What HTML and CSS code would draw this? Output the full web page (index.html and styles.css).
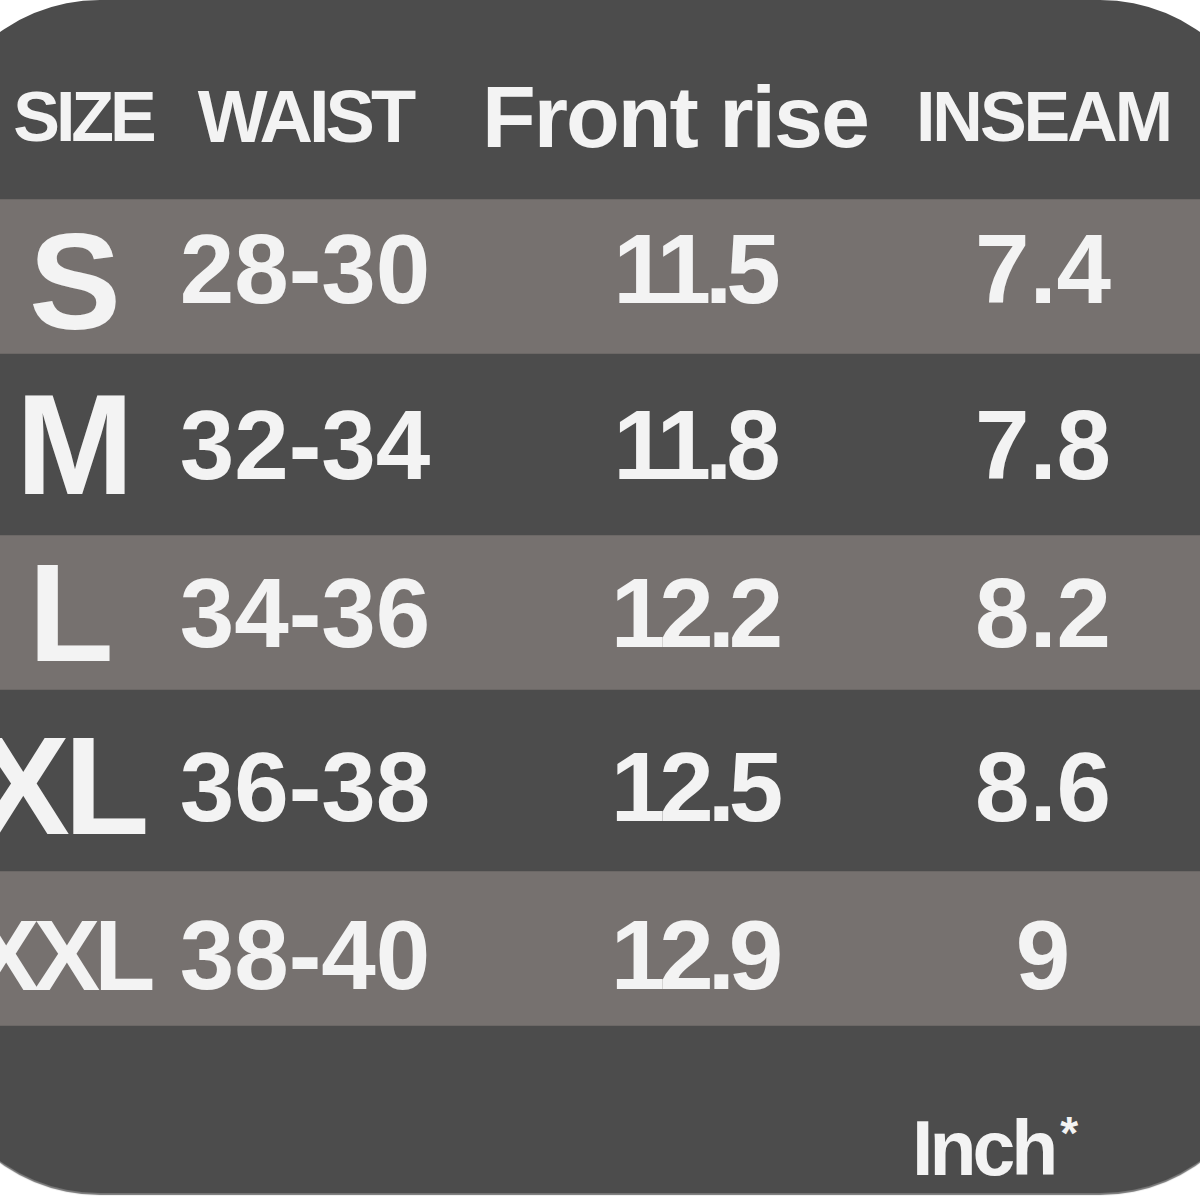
FILE: index.html
```html
<!DOCTYPE html>
<html lang="en">
<head>
<meta charset="utf-8">
<title>Size chart</title>
<link rel="stylesheet" href="styles.css">
</head>
<body>
<div class="card">
  <div class="row head">
    <div class="cell c1"><span class="h-size">SIZE</span></div>
    <div class="cell c2"><span class="h-waist">WAIST</span></div>
    <div class="cell c3"><span class="h-front">Front rise</span></div>
    <div class="cell c4"><span class="h-inseam">INSEAM</span></div>
  </div>
  <div class="row light r-s">
    <div class="cell c1"><span class="sz sz-s">S</span></div>
    <div class="cell c2 num"><span class="n">28-30</span></div>
    <div class="cell c3 num"><span class="n dec">11.5</span></div>
    <div class="cell c4 num"><span class="n">7.4</span></div>
  </div>
  <div class="row dark r-m">
    <div class="cell c1"><span class="sz sz-m">M</span></div>
    <div class="cell c2 num"><span class="n">32-34</span></div>
    <div class="cell c3 num"><span class="n dec">11.8</span></div>
    <div class="cell c4 num"><span class="n">7.8</span></div>
  </div>
  <div class="row light r-l">
    <div class="cell c1"><span class="sz sz-l">L</span></div>
    <div class="cell c2 num"><span class="n">34-36</span></div>
    <div class="cell c3 num"><span class="n dec">12.2</span></div>
    <div class="cell c4 num"><span class="n">8.2</span></div>
  </div>
  <div class="row dark r-xl">
    <div class="cell c1"><span class="sz sz-xl">XL</span></div>
    <div class="cell c2 num"><span class="n">36-38</span></div>
    <div class="cell c3 num"><span class="n dec">12.5</span></div>
    <div class="cell c4 num"><span class="n">8.6</span></div>
  </div>
  <div class="row light r-xxl">
    <div class="cell c1"><span class="sz sz-xxl">XXL</span></div>
    <div class="cell c2 num"><span class="n">38-40</span></div>
    <div class="cell c3 num"><span class="n dec">12.9</span></div>
    <div class="cell c4 num"><span class="n">9</span></div>
  </div>
  <div class="foot">
    <span class="unit">Inch<span class="star">*</span></span>
  </div>
</div>
</body>
</html>
```
FILE: styles.css
```css
html, body {
  margin: 0;
  padding: 0;
  background: #ffffff;
  overflow: hidden;
  width: 1200px;
  height: 1200px;
}

.card {
  margin-left: -72px;
  width: 1344px;
  height: 1193px;
  border-radius: 172px;
  overflow: hidden;
  background: #4c4c4c;
  box-shadow: 0 2px 1px rgba(0, 0, 0, 0.55);
  font-family: "Liberation Sans", Arial, sans-serif;
  font-weight: 700;
  color: #f3f3f3;
  display: flex;
  flex-direction: column;
}

.row {
  display: grid;
  grid-template-columns: 150px 310px 450px 266px 1fr;
  padding-left: 72px;
  box-sizing: border-box;
  align-items: center;
}

.head { height: 199px; padding-top: 34px; }
.light { height: 155px; background: #76716f; box-shadow: inset 0 1px 0 #6c6866, inset 0 -1px 0 #6c6866; }
.dark { height: 181px; }

.cell {
  display: flex;
  justify-content: center;
  align-items: center;
  line-height: 1;
  white-space: nowrap;
  box-sizing: border-box;
}

/* header labels */
.h-size { font-size: 70px; letter-spacing: -4px; margin-left: 16px; }
.h-waist { font-size: 74px; letter-spacing: -4px; }
.h-front { font-size: 88px; letter-spacing: -2px; margin-left: -20px; }
.h-inseam { font-size: 70px; letter-spacing: -3px; }

/* size letters */
.sz { letter-spacing: -6px; }
.sz-s { font-size: 138px; margin-left: -6px; }
.sz-m { font-size: 142px; margin-left: -6px; }
.sz-l { font-size: 140px; margin-left: -14px; }
.sz-xl { font-size: 140px; margin-left: -30px; }
.sz-xxl { font-size: 100px; margin-left: -28px; }

/* numbers */
.n { font-size: 98px; }
.dec { letter-spacing: -6px; margin-left: 18px; }

.r-s .num { padding-bottom: 16px; }
.r-s .c1 { padding-top: 8px; }
.r-xl .num { padding-top: 12px; }
.r-xl .c1 { padding-top: 10px; }
.r-xxl .num, .r-xxl .c1 { padding-top: 12px; }

/* footer */
.foot {
  flex: 1;
  display: flex;
  justify-content: flex-start;
  align-items: flex-end;
  padding-left: 984px;
  padding-bottom: 6px;
}

.unit {
  font-size: 77px;
  line-height: 1;
  letter-spacing: -4px;
}

.star {
  font-size: 46px;
  vertical-align: 26px;
  letter-spacing: 0;
  margin-left: 6px;
}
```
